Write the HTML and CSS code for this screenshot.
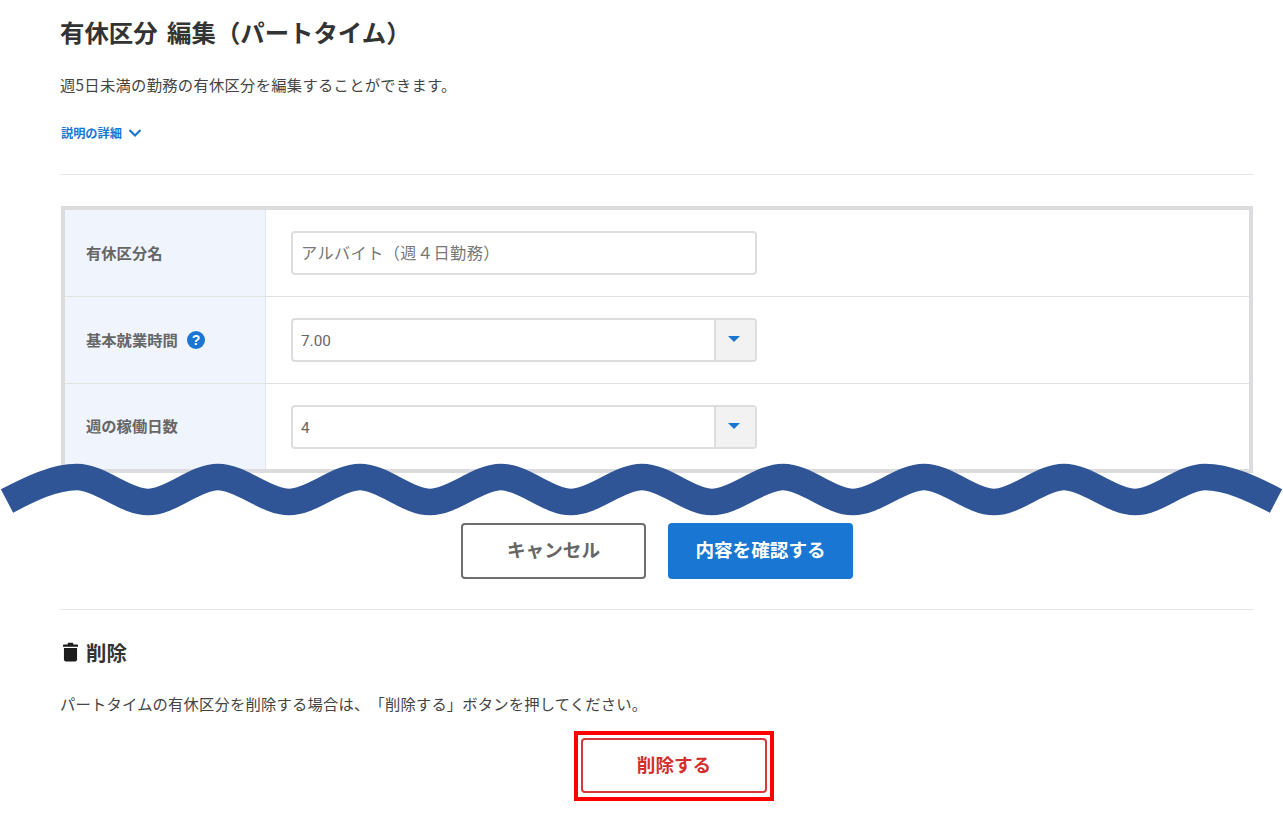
FILE: index.html
```html
<!DOCTYPE html>
<html lang="ja">
<head>
<meta charset="utf-8">
<title>有休区分 編集（パートタイム）</title>
<link rel="stylesheet" href="styles.css">
</head>
<body>
<main class="page">
  <h1 class="title">有休区分 編集（パートタイム）</h1>
  <p class="lead">週5日未満の勤務の有休区分を編集することができます。</p>
  <a class="details" href="#">説明の詳細
    <svg class="chevron" viewBox="0 0 14 10" width="14" height="10"><path d="M1.5 2 L7 7.5 L12.5 2" fill="none" stroke="#1976d2" stroke-width="2.2"/></svg>
  </a>
  <hr class="rule rule-top">
  <div class="form">
    <div class="row">
      <div class="label">有休区分名</div>
      <div class="field"><div class="input placeholder">アルバイト（週４日勤務）</div></div>
    </div>
    <div class="row">
      <div class="label">基本就業時間
        <svg class="help" viewBox="0 0 18 18" width="18" height="18"><circle cx="9" cy="9" r="9" fill="#1976d2"/><text class="help-mark" x="9" y="14" text-anchor="middle">?</text></svg>
      </div>
      <div class="field"><div class="select"><span class="value">7.00</span><span class="caret"></span></div></div>
    </div>
    <div class="row row-last">
      <div class="label">週の稼働日数</div>
      <div class="field"><div class="select"><span class="value">4</span><span class="caret"></span></div></div>
    </div>
  </div>
  <div class="actions">
    <button class="btn btn-cancel" type="button">キャンセル</button>
    <button class="btn btn-primary" type="button">内容を確認する</button>
  </div>
  <hr class="rule rule-bottom">
  <h2 class="delete-title">
    <svg class="trash" viewBox="0 0 16 20" width="15" height="20"><path d="M5 1.2 C5 .5 5.5 0 6.2 0 H9.8 C10.5 0 11 .5 11 1.2 V2 H15.2 C15.6 2 16 2.4 16 2.8 V4.4 H0 V2.8 C0 2.4 .4 2 .8 2 H5 Z" fill="#1c1c1c"/><path d="M1 5.6 H15 V18 C15 19.1 14.1 20 13 20 H3 C1.9 20 1 19.1 1 18 Z" fill="#1c1c1c"/></svg>
    削除
  </h2>
  <p class="delete-text">パートタイムの有休区分を削除する場合は、「削除する」ボタンを押してください。</p>
  <div class="delete-actions">
    <div class="highlight"><button class="btn btn-delete" type="button">削除する</button></div>
  </div>
</main>
<svg class="wave" viewBox="0 0 1283 60" width="1283" height="60">
  <path d="M7 41 C30 29 54 17 77 17 C100 17 125 42 148 42 C171 42 195 17 218 17 C241 17 266 42 289 42 C312 42 337 17 360 17 C383 17 407 42 430 42 C453 42 478 17 501 17 C524 17 548 42 571 42 C594 42 619 17 642 17 C665 17 689 42 712 42 C735 42 760 17 783 17 C806 17 830 42 853 42 C876 42 901 17 924 17 C947 17 971 42 994 42 C1017 42 1041 17 1064 17 C1087 17 1112 42 1135 42 C1158 42 1182 17 1205 17 C1228 17 1253 29 1276 41" fill="none" stroke="#2f5597" stroke-width="26.5"/>
</svg>
</body>
</html>
```
FILE: styles.css
```css
* { box-sizing: border-box; }
html, body { margin: 0; padding: 0; background: #fff; }
body {
  position: relative;
  height: 819px;
  overflow: hidden;
  font-family: "Noto Sans CJK JP", "Noto Sans", sans-serif;
  color: #333;
  text-spacing-trim: space-all;
  text-autospace: no-autospace;
}
.page { padding: 15px 30px 0 60px; }
.title { margin: 0; font-size: 24.4px; word-spacing: 4px; line-height: 34px; font-weight: 700; color: #333; }
.lead { margin: 23px 0 0; font-size: 15.3px; letter-spacing: .28px; line-height: 24px; color: #444; }
.details {
  display: flex;
  align-items: center;
  gap: 6px;
  margin-top: 28px;
  padding-left: 1px;
  height: 18px;
  font-size: 12.2px;
  line-height: 18px;
  font-weight: 700;
  color: #1976d2;
  text-decoration: none;
}
.rule { margin: 0; border: 0; height: 1px; background: #e8e8e8; }
.rule-top { margin-top: 32px; }
.form { margin: 31px 0 0 1px; border: 4px solid #dcdcdf; }
.row { display: flex; height: 87px; border-bottom: 1px solid #e2e2e2; }
.row-last { height: 85px; border-bottom: 0; }
.label {
  display: flex;
  align-items: center;
  gap: 9px;
  width: 201px;
  padding: 0 0 3px 21px;
  background: #eff4fd;
  border-right: 1px solid #e2e6ec;
  font-size: 15.3px;
  font-weight: 700;
  color: #666;
}
.help { flex: none; margin-top: 3px; }
.help-mark { font-family: "Liberation Sans", sans-serif; font-size: 14px; font-weight: 700; fill: #fff; }
.field { flex: 1; display: flex; align-items: center; padding-left: 25px; }
.input, .select {
  width: 466px;
  height: 44px;
  border: 2px solid #ddd;
  border-radius: 4px;
  background: #fff;
  font-size: 15.3px;
  line-height: 40px;
  color: #666;
}
.input { padding-left: 8px; }
.placeholder { font-size: 16.2px; letter-spacing: .4px; line-height: 38px; color: #777; }
.select { display: flex; overflow: hidden; font-family: Roboto, "Noto Sans CJK JP", sans-serif; }
.value { flex: 1; padding: 1px 0 0 8px; }
.caret {
  position: relative;
  width: 41px;
  background: #f2f2f2;
  border-left: 2px solid #ddd;
}
.caret::after {
  content: "";
  position: absolute;
  left: 12px;
  top: 16px;
  border-style: solid;
  border-width: 6px 6px 0;
  border-color: #1976d2 transparent transparent;
}
.actions { display: flex; justify-content: center; gap: 22px; margin-top: 50px; padding-left: 1px; }
.btn {
  height: 56px;
  padding: 0 0 5px;
  border-radius: 4px;
  font-family: inherit;
  font-size: 18.6px;
  font-weight: 700;
  background: #fff;
}
.btn-cancel { width: 185px; border: 2px solid #6e6e6e; color: #666; }
.btn-primary { width: 185px; border: 0; background: #1976d2; color: #fff; }
.rule-bottom { margin-top: 30px; }
.delete-title {
  display: flex;
  align-items: center;
  gap: 8px;
  margin: 27px 0 0;
  height: 30px;
  font-size: 20.4px;
  line-height: 30px;
  font-weight: 700;
  color: #333;
}
.trash { flex: none; margin-left: 3px; }
.delete-text { margin: 24px 0 0; font-size: 15.3px; letter-spacing: .19px; line-height: 24px; color: #444; }
.delete-actions { display: flex; justify-content: center; padding-left: 35px; margin-top: 16px; }
.highlight { padding: 3px 3px 4px; border: 4px solid #f00; }
.btn-delete { display: block; width: 186px; height: 55px; border: 2px solid #d9383a; color: #d32f2f; }
.wave { position: absolute; left: 0; top: 460px; }
```
